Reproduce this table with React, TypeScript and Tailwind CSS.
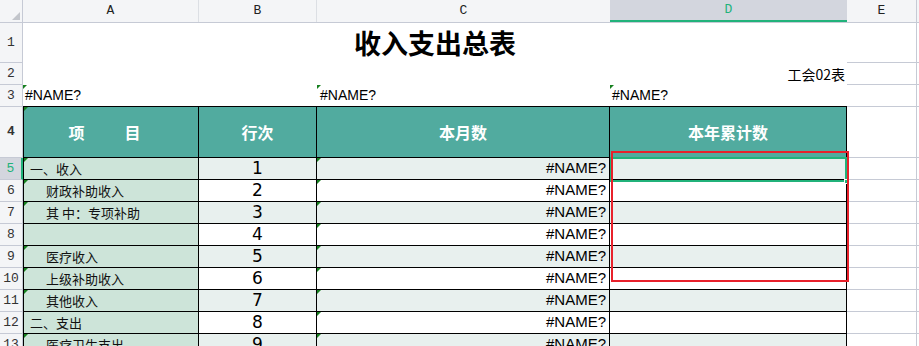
import React from 'react';

const GRID = 'border-[#c6cad5]';
const CJK = "font-['Noto_Sans_CJK_SC','Noto_Sans',sans-serif]";
const LAT = "font-['Liberation_Sans','Noto_Sans_CJK_SC',sans-serif]";
const HEAD = "font-['Liberation_Mono',monospace]";

const rows = [
  { n: 5, label: '一、收入', indent: false, no: 1, tri: true },
  { n: 6, label: '财政补助收入', indent: true, no: 2, tri: true },
  { n: 7, label: '其 中：专项补助', indent: true, no: 3, tri: true },
  { n: 8, label: '', indent: false, no: 4, tri: false },
  { n: 9, label: '医疗收入', indent: true, no: 5, tri: true },
  { n: 10, label: '上级补助收入', indent: true, no: 6, tri: true },
  { n: 11, label: '其他收入', indent: true, no: 7, tri: true },
  { n: 12, label: '二、支出', indent: false, no: 8, tri: false },
  { n: 13, label: '医疗卫生支出', indent: true, no: 9, tri: true },
];

const Tri: React.FC = () => (
  <span className="absolute left-0 top-0 w-0 h-0 border-t-[4px] border-r-[4px] border-t-[#16801f] border-r-transparent" />
);

const RowHead: React.FC<{ n: number; active?: boolean }> = ({ n, active }) =>
  active ? (
    <div className={`w-[23px] shrink-0 flex items-center justify-center bg-[#d3d6de] border-r-2 border-r-[#21b27a] border-b ${GRID} text-[13px] text-[#21b27a] ${HEAD}`}>
      {n}
    </div>
  ) : (
    <div className={`w-[23px] shrink-0 flex items-center justify-center bg-[#f4f5f7] border-r border-b ${GRID} text-[13px] text-[#333] ${HEAD}`}>
      {n}
    </div>
  );

const Tail: React.FC = () => (
  <>
    <div className={`w-[70px] shrink-0 border-r border-b ${GRID}`} />
    <div className={`flex-1 border-b ${GRID}`} />
  </>
);

const App: React.FC = () => {
  return (
    <div className="relative w-[919px] h-[346px] overflow-hidden bg-white text-black">
      {/* column letters */}
      <div className={`flex h-[23px] bg-[#f4f5f7] border-b ${GRID} text-[13px] text-[#222] ${HEAD}`}>
        <div className={`relative w-[23px] shrink-0 border-r ${GRID}`}>
          <svg className="absolute left-[12px] top-[12px]" width="8" height="8" viewBox="0 0 8 8">
            <polygon points="8,0 8,8 0,8" fill="#c2c5cb" />
          </svg>
        </div>
        <div className="w-[176px] shrink-0 flex items-end justify-center pb-[2px] border-r border-[#dcdfe4]">A</div>
        <div className="w-[118px] shrink-0 flex items-end justify-center pb-[2px] border-r border-[#dcdfe4]">B</div>
        <div className="w-[293px] shrink-0 flex items-end justify-center pb-[2px]">C</div>
        <div className="w-[237px] shrink-0 flex items-end justify-center pb-[1px] bg-[#d3d6de] border-b-2 border-[#21b27a] text-[#21b27a]">D</div>
        <div className={`w-[70px] shrink-0 flex items-end justify-center pb-[2px] border-r ${GRID}`}>E</div>
        <div className="flex-1" />
      </div>

      {/* row 1 */}
      <div className="flex h-[40px]">
        <RowHead n={1} />
        <div className={`w-[824px] shrink-0 flex items-center justify-center text-[27px] font-bold ${CJK}`}>收入支出总表</div>
        <Tail />
      </div>

      {/* row 2 */}
      <div className="flex h-[22px]">
        <RowHead n={2} />
        <div className={`w-[824px] shrink-0 flex items-center justify-end pr-[2px] text-[14px] ${CJK}`}>工会02表</div>
        <Tail />
      </div>

      {/* row 3 */}
      <div className={`flex h-[22px] text-[14px] ${LAT}`}>
        <RowHead n={3} />
        <div className="relative w-[176px] shrink-0 flex items-center pl-[2px] border-b border-black">
          <Tri />#NAME?
        </div>
        <div className="w-[118px] shrink-0 border-b border-black" />
        <div className="relative w-[293px] shrink-0 flex items-center pl-[3px] border-b border-black">
          <Tri />#NAME?
        </div>
        <div className="relative w-[237px] shrink-0 flex items-center pl-[2px] border-b border-black">
          <Tri />#NAME?
        </div>
        <Tail />
      </div>

      {/* row 4: table head */}
      <div className={`flex h-[51px] text-[16px] font-bold text-white ${CJK}`}>
        <RowHead n={4} />
        <div className="relative w-[176px] shrink-0 flex items-center justify-center pr-[13px] bg-[#51ab9f] border-l border-r border-b border-black">
          <Tri />
          <span>项</span>
          <span className="w-[40px]" />
          <span>目</span>
        </div>
        <div className="w-[118px] shrink-0 flex items-center justify-center bg-[#51ab9f] border-r border-b border-black">行次</div>
        <div className="w-[293px] shrink-0 flex items-center justify-center bg-[#51ab9f] border-r border-b border-black">本月数</div>
        <div className="w-[237px] shrink-0 flex items-center justify-center bg-[#51ab9f] border-r border-b border-black">本年累计数</div>
        <Tail />
      </div>

      {rows.map((r) => {
        const shade = r.n % 2 === 1 ? 'bg-[#e8f0ee]' : 'bg-white';
        return (
          <div key={r.n} className="flex h-[22px]">
            <RowHead n={r.n} active={r.n === 5} />
            <div
              className={`relative w-[176px] shrink-0 flex items-center bg-[#cde4d9] border-l border-r border-b border-black text-[13px] text-[#111] ${CJK} ${
                r.indent ? 'pl-[22px]' : 'pl-[6px]'
              }`}
            >
              {r.tri && <Tri />}
              {r.label}
            </div>
            <div className={`w-[118px] shrink-0 flex items-center justify-center ${shade} border-r border-b border-black text-[17px] font-['DejaVu_Sans',sans-serif]`}>
              {r.no}
            </div>
            <div className={`relative w-[293px] shrink-0 flex items-center justify-end pr-[3px] ${shade} border-r border-b border-black text-[15px] ${LAT}`}>
              <Tri />#NAME?
            </div>
            <div className={`w-[237px] shrink-0 ${shade} border-r border-b border-black`} />
            <Tail />
          </div>
        );
      })}

      {/* active cell D5 */}
      <div className="absolute left-[610px] top-[157px] w-[237px] h-[25px] border-2 border-[#21b27a]" />
      <div className="absolute left-[844px] top-[179px] w-[5px] h-[5px] bg-[#21b27a] border border-white" />
      {/* red highlight box */}
      <div className="absolute left-[611px] top-[151px] w-[238px] h-[131px] border-2 border-[#e8212b]" />
    </div>
  );
};

export default App;
